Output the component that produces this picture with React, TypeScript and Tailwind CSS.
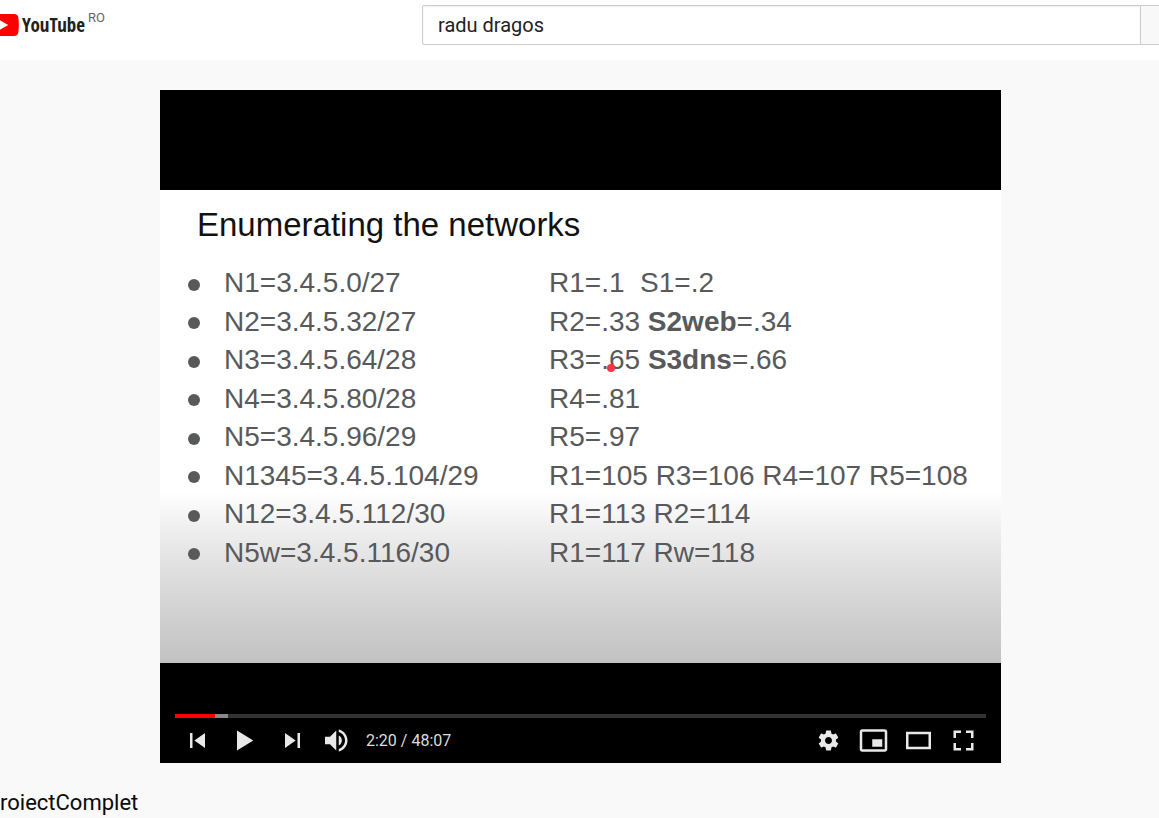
import React from "react";

type Row = { network: string; hosts: React.ReactNode };

const rows: Row[] = [
  { network: "N1=3.4.5.0/27", hosts: "R1=.1\u00a0 S1=.2" },
  { network: "N2=3.4.5.32/27", hosts: <>R2=.33 <b>S2web</b>=.34</> },
  {
    network: "N3=3.4.5.64/28",
    hosts: (
      <>
        R3=.
        <span className="relative">
          <span className="absolute bottom-[3px] -left-[2px] size-2 rounded-full bg-[#ff3347]" />
          65
        </span>{" "}
        <b>S3dns</b>=.66
      </>
    ),
  },
  { network: "N4=3.4.5.80/28", hosts: "R4=.81" },
  { network: "N5=3.4.5.96/29", hosts: "R5=.97" },
  { network: "N1345=3.4.5.104/29", hosts: "R1=105 R3=106 R4=107 R5=108" },
  { network: "N12=3.4.5.112/30", hosts: "R1=113 R2=114" },
  { network: "N5w=3.4.5.116/30", hosts: "R1=117 Rw=118" },
];

const icons = {
  previous: "m 12,12 h 2 v 12 h -2 z m 3.5,6 8.5,6 V 12 z",
  play: "M 12,26 25,18 12,10 z",
  next: "M 12,24 20.5,18 12,12 V 24 z M 22,12 v 12 h 2 V 12 h -2 z",
  volume:
    "M8,21 L12,21 L17,26 L17,10 L12,15 L8,15 L8,21 Z M19,14 L19,22 C20.48,21.32 21.5,19.77 21.5,18 C21.5,16.26 20.48,14.74 19,14 Z M19,11.29 C21.89,12.15 24,14.83 24,18 C24,21.17 21.89,23.85 19,24.71 L19,26.77 C23.01,25.86 26,22.28 26,18 C26,13.72 23.01,10.14 19,9.23 L19,11.29 Z",
  settings:
    "m 23.94,18.78 c .03,-0.25 .05,-0.51 .05,-0.78 0,-0.27 -0.02,-0.52 -0.05,-0.78 l 1.68,-1.32 c .15,-0.12 .19,-0.33 .09,-0.51 l -1.6,-2.76 c -0.09,-0.17 -0.31,-0.24 -0.48,-0.17 l -1.99,.8 c -0.41,-0.32 -0.86,-0.58 -1.35,-0.78 l -0.30,-2.12 c -0.02,-0.19 -0.19,-0.33 -0.39,-0.33 l -3.2,0 c -0.2,0 -0.36,.14 -0.39,.33 l -0.30,2.12 c -0.48,.2 -0.93,.47 -1.35,.78 l -1.99,-0.8 c -0.18,-0.07 -0.39,0 -0.48,.17 l -1.6,2.76 c -0.10,.17 -0.05,.39 .09,.51 l 1.68,1.32 c -0.03,.25 -0.05,.52 -0.05,.78 0,.26 .02,.52 .05,.78 l -1.68,1.32 c -0.15,.12 -0.19,.33 -0.09,.51 l 1.6,2.76 c .09,.17 .31,.24 .48,.17 l 1.99,-0.8 c .41,.32 .86,.58 1.35,.78 l .30,2.12 c .02,.19 .19,.33 .39,.33 l 3.2,0 c .2,0 .36,-0.14 .39,-0.33 l .30,-2.12 c .48,-0.2 .93,-0.47 1.35,-0.78 l 1.99,.8 c .18,.07 .39,0 .48,-0.17 l 1.6,-2.76 c .09,-0.17 .05,-0.39 -0.09,-0.51 l -1.68,-1.32 0,0 z m -5.94,2.01 c -1.54,0 -2.8,-1.25 -2.8,-2.8 0,-1.54 1.25,-2.8 2.8,-2.8 1.54,0 2.8,1.25 2.8,2.8 0,1.54 -1.25,2.8 -2.8,2.8 z",
  miniplayer:
    "M25,17 L17,17 L17,23 L25,23 Z M29,25 L29,10.98 C29,9.88 28.1,9 27,9 L9,9 C7.9,9 7,9.88 7,10.98 L7,25 C7,26.1 7.9,27 9,27 L27,27 C28.1,27 29,26.1 29,25 Z M27,25.02 L9,25.02 L9,10.97 L27,10.97 Z",
  theater: "m 28,11 0,14 -20,0 0,-14 z m -18,2 16,0 0,10 -16,0 0,-10 z",
  fullscreen:
    "m 10,16 2,0 0,-4 4,0 0,-2 -6,0 z M 20,10 l 0,2 4,0 0,4 2,0 0,-6 z M 24,24 l -4,0 0,2 6,0 0,-6 -2,0 z M 12,20 l -2,0 0,6 6,0 0,-2 -4,0 z",
};

function Control({ name, label }: { name: keyof typeof icons; label: string }) {
  return (
    <button type="button" aria-label={label} className="size-[45px] text-[#e9e9e9]">
      <svg viewBox="0 0 36 36" className="size-full" aria-hidden="true">
        <path d={icons[name]} fill="currentColor" fillRule="evenodd" />
      </svg>
    </button>
  );
}

function Header() {
  return (
    <header className="flex h-[60px] bg-white">
      <a href="#" aria-label="YouTube RO" className="flex w-[422px] shrink-0 items-start pt-3">
        <svg viewBox="0 0 19 26" className="h-[26px] w-[19px]" aria-hidden="true">
          <path d="M0 2H13C17 2 18 3 18.4 6C19 10.500 19 15.500 18.400 19.500C18 23 17 24 13 24H0Z" fill="#f00" />
          <path d="M0 8.300 8.200 13 0 17.700Z" fill="#fff" />
        </svg>
        <span className="ml-[3px] font-['Open_Sans_Condensed','Noto_Sans_ExtraCondensed','Liberation_Sans_Narrow','Roboto_Condensed',sans-serif] text-[19px] leading-[26px] font-bold text-[#212121]">
          YouTube
        </span>
        <span className="ml-[3px] text-[13px] leading-3 text-[#666]">RO</span>
      </a>
      <form className="mt-[5px] flex h-10 flex-1" onSubmit={(e) => e.preventDefault()}>
        <input
          type="text"
          aria-label="Search"
          defaultValue="radu dragos"
          className="min-w-0 flex-1 rounded-l-[2px] border border-[#ccc] bg-white px-[15px] text-xl text-[#222] shadow-[inset_0_1px_2px_#eee] outline-none"
        />
        <button type="submit" aria-label="Submit search" className="w-[18px] border-y border-[#ccc] bg-[#f8f8f8]" />
      </form>
    </header>
  );
}

function Slide() {
  return (
    <section className="h-[473px] overflow-hidden bg-[linear-gradient(to_bottom,#fff_64%,#f0f0f0_71%,#dedede_81%,#d0d0d0_90%,#c2c2c2_100%)] pt-[15px] pl-7 font-['Liberation_Sans',Arial,sans-serif] whitespace-nowrap">
      <h2 className="pl-[9px] text-[33px] leading-10 text-[#111]">Enumerating the networks</h2>
      <ul className="mt-[19px] grid h-[308px] auto-rows-fr text-[28px] leading-8 text-[#58595b]">
        {rows.map((row) => (
          <li key={row.network} className="grid grid-cols-[36px_325px_1fr] items-center">
            <span className="mt-[3px] size-3 rounded-full bg-[#58595b]" />
            <span>{row.network}</span>
            <span>{row.hosts}</span>
          </li>
        ))}
      </ul>
    </section>
  );
}

function Player() {
  return (
    <div className="bg-black pt-[100px]">
      <Slide />
      <div className="px-[15px] pt-[51px]">
        <div className="flex h-1 bg-[#333]">
          <div className="w-10 bg-[#f00]" />
          <div className="w-[13px] bg-[#888]" />
        </div>
        <div className="flex h-[45px] items-center justify-between">
          <div className="flex items-center">
            <Control name="previous" label="Previous" />
            <div className="flex pr-[3px] pl-[2px]">
              <Control name="play" label="Play" />
            </div>
            <Control name="next" label="Next" />
            <Control name="volume" label="Mute" />
            <span className="ml-[6px] text-base text-[#ddd]">2:20 / 48:07</span>
          </div>
          <div className="flex">
            <Control name="settings" label="Settings" />
            <Control name="miniplayer" label="Miniplayer" />
            <Control name="theater" label="Theater mode" />
            <Control name="fullscreen" label="Full screen" />
          </div>
        </div>
      </div>
    </div>
  );
}

export default function App() {
  return (
    <div className="min-h-screen overflow-hidden bg-[#f9f9f9] font-[Roboto,sans-serif]">
      <Header />
      <main>
        <div className="pt-[30px] pr-[158px] pl-40">
          <Player />
        </div>
        <h1 className="mt-6 text-[22px] leading-8 text-[#0a0a0a]">roiectComplet</h1>
      </main>
    </div>
  );
}
